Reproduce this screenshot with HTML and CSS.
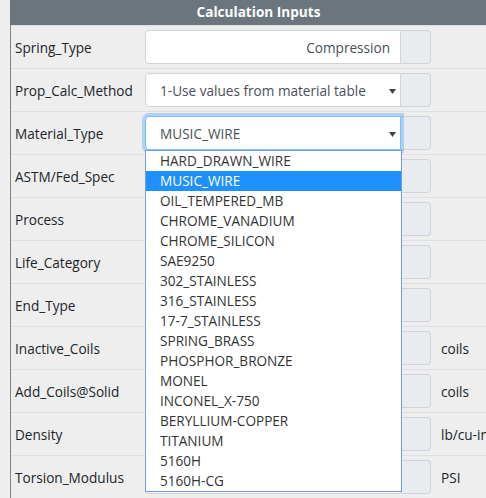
FILE: index.html
```html
<!DOCTYPE html>
<html>
<head>
<meta charset="utf-8">
<link rel="stylesheet" href="styles.css">
</head>
<body>
<div class="panel">
  <div class="head">Calculation Inputs</div>
  <div class="row">
    <div class="label">Spring_Type</div>
    <div class="group"><div class="field right">Compression</div><div class="append"></div></div>
    <div class="unit"></div>
  </div>
  <div class="row">
    <div class="label">Prop_Calc_Method</div>
    <div class="group"><div class="field select">1-Use values from material table<svg class="arrow" width="7" height="5" viewBox="0 0 7 5"><polygon points="0,0 7,0 3.5,5" fill="#444"/></svg></div><div class="append"></div></div>
    <div class="unit"></div>
  </div>
  <div class="row">
    <div class="label">Material_Type</div>
    <div class="group open"><div class="field select focus">MUSIC_WIRE<svg class="arrow" width="7" height="5" viewBox="0 0 7 5"><polygon points="0,0 7,0 3.5,5" fill="#444"/></svg></div><div class="append"></div>
      <ul class="menu">
        <li>HARD_DRAWN_WIRE</li>
        <li class="sel">MUSIC_WIRE</li>
        <li>OIL_TEMPERED_MB</li>
        <li>CHROME_VANADIUM</li>
        <li>CHROME_SILICON</li>
        <li>SAE9250</li>
        <li>302_STAINLESS</li>
        <li>316_STAINLESS</li>
        <li>17-7_STAINLESS</li>
        <li>SPRING_BRASS</li>
        <li>PHOSPHOR_BRONZE</li>
        <li>MONEL</li>
        <li>INCONEL_X-750</li>
        <li>BERYLLIUM-COPPER</li>
        <li>TITANIUM</li>
        <li>5160H</li>
        <li>5160H-CG</li>
      </ul>
    </div>
    <div class="unit"></div>
  </div>
  <div class="row">
    <div class="label">ASTM/Fed_Spec</div>
    <div class="group"><div class="field"></div><div class="append"></div></div>
    <div class="unit"></div>
  </div>
  <div class="row">
    <div class="label">Process</div>
    <div class="group"><div class="field"></div><div class="append"></div></div>
    <div class="unit"></div>
  </div>
  <div class="row">
    <div class="label">Life_Category</div>
    <div class="group"><div class="field"></div><div class="append"></div></div>
    <div class="unit"></div>
  </div>
  <div class="row">
    <div class="label">End_Type</div>
    <div class="group"><div class="field"></div><div class="append"></div></div>
    <div class="unit"></div>
  </div>
  <div class="row">
    <div class="label">Inactive_Coils</div>
    <div class="group"><div class="field"></div><div class="append"></div></div>
    <div class="unit">coils</div>
  </div>
  <div class="row">
    <div class="label">Add_Coils@Solid</div>
    <div class="group"><div class="field"></div><div class="append"></div></div>
    <div class="unit">coils</div>
  </div>
  <div class="row">
    <div class="label">Density</div>
    <div class="group"><div class="field"></div><div class="append"></div></div>
    <div class="unit">lb/cu-in</div>
  </div>
  <div class="row">
    <div class="label">Torsion_Modulus</div>
    <div class="group"><div class="field"></div><div class="append"></div></div>
    <div class="unit">PSI</div>
  </div>
</div>
</body>
</html>
```

FILE: styles.css
```css
html, body {
  margin: 0;
  padding: 0;
  background: #eeeeee;
  overflow: hidden;
  font-family: "Open Sans", "Noto Sans", sans-serif;
  font-size: 13.6px;
  color: #212529;
}
.panel {
  margin-left: 10px;
  width: 496px;
  border-left: 1px solid #7d8389;
}
.head {
  height: 25px;
  line-height: 24px;
  margin-left: -1px;
  background: #6c757d;
  color: #fff;
  font-weight: bold;
  text-align: center;
}
.row {
  display: flex;
  align-items: center;
  height: 42px;
  border-top: 1px solid #dcdfe3;
}
.label {
  width: 130px;
  padding-left: 4px;
  flex: none;
}
.group {
  position: relative;
  display: flex;
  width: 286px;
  height: 34px;
  flex: none;
}
.field {
  flex: 1;
  position: relative;
  display: flex;
  align-items: center;
  background: #fff;
  border: 1px solid #ced4da;
  border-radius: 4px 0 0 4px;
  color: #495057;
  padding: 0 14px;
}
.field.right {
  justify-content: flex-end;
  padding-right: 10px;
}
.field.focus {
  border-color: #80bdff;
  box-shadow: 0 0 0 3px rgba(0, 123, 255, 0.25);
  z-index: 1;
}
.arrow {
  position: absolute;
  right: 4px;
  top: 15px;
}
.append {
  width: 29px;
  background: #e9ecef;
  border: 1px solid #ced4da;
  border-left: none;
  border-radius: 0 4px 4px 0;
}
.unit {
  padding-left: 10px;
  white-space: nowrap;
}
.menu {
  position: absolute;
  left: 0;
  top: 34px;
  width: 255px;
  margin: 0;
  padding: 0;
  list-style: none;
  background: #fff;
  border: 1px solid #7a9bd6;
  z-index: 2;
  color: #333;
}
.menu li {
  height: 20px;
  line-height: 20px;
  padding-left: 14px;
}
.menu li.sel {
  background: #1e90ff;
  color: #fff;
}
```
